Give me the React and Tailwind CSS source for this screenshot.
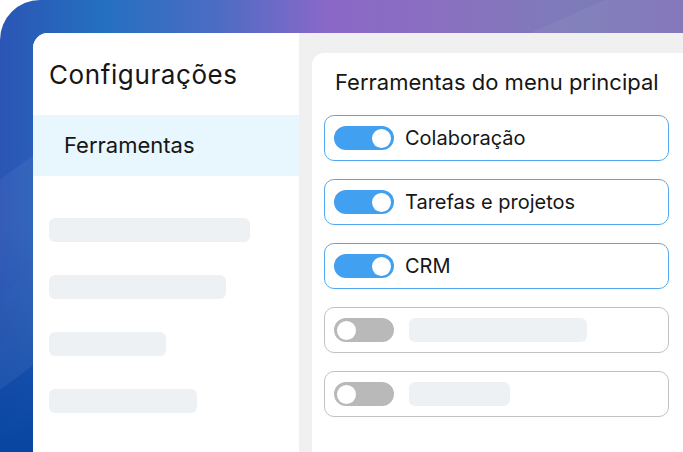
import React from "react";

function Toggle({ on }) {
  return (
    <div
      className={
        "relative flex h-[24px] w-[60px] shrink-0 items-center rounded-full px-[3px] " +
        (on ? "justify-end bg-[#42a0f0]" : "justify-start bg-[#b9b9b9]")
      }
    >
      <div className="h-[19px] w-[19px] rounded-full bg-white" />
    </div>
  );
}

function Row({ on, label, skel }) {
  return (
    <div
      className={
        "flex h-[46px] items-center gap-[11px] rounded-[10px] border pl-[9px] " +
        (on ? "border-[#55a8f0]" : "border-[#c2c2c2]")
      }
    >
      <Toggle on={on} />
      {on ? (
        <span className="text-[20px] leading-none text-[#161616]">{label}</span>
      ) : (
        <div className="ml-[4px] h-[24px] rounded-[6px] bg-[#eef1f4]" style={{ width: skel }} />
      )}
    </div>
  );
}

export default function App() {
  return (
    <div
      className="h-[452px] w-[683px] overflow-hidden bg-white"
      style={{ fontFamily: "Inter, 'Noto Sans', sans-serif" }}
    >
      <div className="relative h-full rounded-tl-[40px] bg-[linear-gradient(180deg,rgba(8,70,162,0)_50%,#0846a2_100%),linear-gradient(90deg,#2b55b5_0%,#2470c0_15%,#4d6cc4_32%,#8a68c8_48%,#8a70c0_65%,#7c7cb8_85%,#8070b8_100%)] pl-[33px] pt-[33px]">
        <svg
          className="absolute left-0 top-0 h-full w-full"
          viewBox="0 0 683 452"
          preserveAspectRatio="none"
        >
          <polygon points="0,295 40,262 40,360 0,390" fill="rgba(255,255,255,0.06)" />
          <polygon points="0,180 40,150 40,262 0,295" fill="rgba(255,255,255,0.05)" />
          <polygon points="530,33 605,0 683,0 683,33" fill="rgba(255,255,255,0.05)" />
        </svg>
        <div className="relative flex h-full overflow-hidden rounded-tl-[15px] bg-white">
          <aside className="flex w-[266px] shrink-0 flex-col bg-white">
            <h1 className="pl-[16px] pt-[27px] text-[26px] font-normal leading-[30px] tracking-[0.6px] text-[#161616]">
              Configurações
            </h1>
            <div className="mt-[25px] flex h-[61px] items-center bg-[#e8f7fd] pl-[31px] text-[22px] text-[#161616]">
              Ferramentas
            </div>
            <div className="flex flex-col gap-[33px] pl-[16px] pt-[42px]">
              <div className="h-[24px] w-[201px] rounded-[6px] bg-[#eef1f4]" />
              <div className="h-[24px] w-[177px] rounded-[6px] bg-[#eef1f4]" />
              <div className="h-[24px] w-[117px] rounded-[6px] bg-[#eef1f4]" />
              <div className="h-[24px] w-[148px] rounded-[6px] bg-[#eef1f4]" />
            </div>
          </aside>
          <main className="flex-1 bg-[#f0f0f0] pl-[13px] pt-[20px]">
            <div className="h-full rounded-tl-[12px] bg-white pl-[12px] pr-[14px] pt-[17px]">
              <h2 className="pl-[11px] text-[22px] font-normal leading-[24px] text-[#161616]">
                Ferramentas do menu principal
              </h2>
              <div className="mt-[21px] flex flex-col gap-[18px]">
                <Row on label="Colaboração" />
                <Row on label="Tarefas e projetos" />
                <Row on label="CRM" />
                <Row on={false} skel={178} />
                <Row on={false} skel={101} />
              </div>
            </div>
          </main>
        </div>
      </div>
    </div>
  );
}
